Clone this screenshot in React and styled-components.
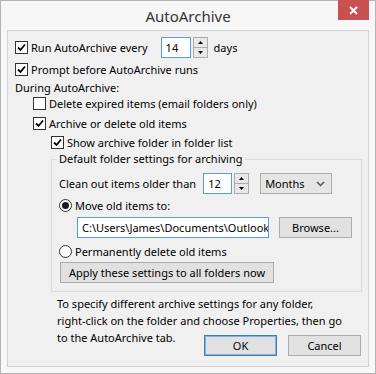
import React from 'react';
import styled, { createGlobalStyle } from 'styled-components';

const Global = createGlobalStyle`
  html, body { margin: 0; padding: 0; background: #ffffff; }
  body { font-family: "Noto Sans", "Open Sans", sans-serif; font-size: 11px; color: #000; }
`;

const Window = styled.div`
  width: 376px;
  height: 374px;
  box-sizing: border-box;
  border: 1px solid #b4b4b4;
  background: #f7f7f7;
  display: flex;
  flex-direction: column;
`;

const TitleBar = styled.div`
  height: 29px;
  display: flex;
  align-items: center;
  justify-content: center;
  position: relative;
  font-size: 15px;
  color: #333;
`;

const CloseButton = styled.div`
  position: absolute;
  top: -1px;
  right: 6px;
  width: 31px;
  height: 20px;
  background: #c75050;
  display: flex;
  align-items: center;
  justify-content: center;
`;

const Client = styled.div`
  margin: 0 6px 6px 6px;
  flex: 1;
  border: 1px solid #d4d4d4;
  background: #f0f0f0;
  padding: 5px 7px 0 7px;
  display: flex;
  flex-direction: column;
`;

const Row = styled.div`
  display: flex;
  align-items: center;
  height: ${p => p.h}px;
  margin-left: ${p => p.indent || 0}px;
  margin-top: ${p => p.mt || 0}px;
  white-space: nowrap;
`;

const Box = styled.span`
  width: 13px;
  height: 13px;
  box-sizing: border-box;
  border: 1px solid #333;
  background: #fff;
  display: inline-flex;
  align-items: center;
  justify-content: center;
  margin-right: 3px;
  flex: none;
`;

const RadioDot = styled.span`
  width: 13px;
  height: 13px;
  box-sizing: border-box;
  border: 1px solid #333;
  border-radius: 50%;
  background: #fff;
  display: inline-flex;
  align-items: center;
  justify-content: center;
  margin-right: 3px;
  flex: none;
  &::after {
    content: '';
    display: ${p => (p.on ? 'block' : 'none')};
    width: 7px;
    height: 7px;
    border-radius: 50%;
    background: #1a1a1a;
  }
`;

const TextBox = styled.div`
  width: ${p => p.w}px;
  height: 21px;
  box-sizing: border-box;
  border: 1px solid #569de5;
  background: #fff;
  display: flex;
  align-items: center;
  padding-left: 4px;
  margin-left: ${p => p.ml || 0}px;
  overflow: hidden;
`;

const Spinner = styled.div`
  display: flex;
  flex-direction: column;
  margin-left: 2px;
  width: 15px;
  height: 21px;
`;

const SpinHalf = styled.div`
  flex: 1;
  box-sizing: border-box;
  border: 1px solid #acacac;
  background: #e8e8e8;
  display: flex;
  align-items: center;
  justify-content: center;
  & + & { border-top: none; }
`;

const Select = styled.div`
  width: 72px;
  height: 21px;
  box-sizing: border-box;
  border: 1px solid #acacac;
  background: #e5e5e5;
  display: flex;
  align-items: center;
  justify-content: space-between;
  padding: 0 6px 0 4px;
  margin-left: 11px;
`;

const Button = styled.div`
  width: ${p => p.w}px;
  height: 21px;
  box-sizing: border-box;
  border: 1px solid ${p => (p.primary ? '#3c7fb1' : '#acacac')};
  background: #e1e1e1;
  display: flex;
  align-items: center;
  justify-content: center;
  margin-left: ${p => p.ml || 0}px;
  ${p => p.primary && 'box-shadow: inset 0 0 0 1px #7eb4ea;'}
`;

const Group = styled.fieldset`
  margin: -1px 0 0 36px;
  width: 311px;
  box-sizing: border-box;
  border: 1px solid #dcdcdc;
  padding: 0 0 8px 7px;
  min-width: 0;
`;

const Legend = styled.legend`
  padding: 0 2px;
  margin-left: -2px;
  line-height: 16px;
`;

const Note = styled.div`
  margin: 3px 0 0 42px;
  line-height: 17px;
`;

const Footer = styled.div`
  display: flex;
  justify-content: flex-end;
  margin-top: -11px;
`;

const Days = styled.span`
  margin-left: 6px;
`;

const Check = () => (
  <svg width="9" height="9" viewBox="0 0 9 9">
    <path d="M1 4.5 L3.5 7 L8 1.5" fill="none" stroke="#000" strokeWidth="1.8" />
  </svg>
);

const Up = () => (
  <svg width="5" height="3" viewBox="0 0 5 3"><path d="M0 3 L2.5 0 L5 3 Z" fill="#000" /></svg>
);
const Down = () => (
  <svg width="5" height="3" viewBox="0 0 5 3"><path d="M0 0 L2.5 3 L5 0 Z" fill="#000" /></svg>
);

const Spin = ({ value, w, ml }) => (
  <>
    <TextBox w={w} ml={ml}>{value}</TextBox>
    <Spinner>
      <SpinHalf><Up /></SpinHalf>
      <SpinHalf><Down /></SpinHalf>
    </Spinner>
  </>
);

const CheckBox = ({ on }) => <Box>{on && <Check />}</Box>;

export default function App() {
  return (
    <>
      <Global />
      <Window>
        <TitleBar>
          AutoArchive
          <CloseButton>
            <svg width="9" height="9" viewBox="0 0 9 9">
              <path d="M1 1 L8 8 M8 1 L1 8" stroke="#fff" strokeWidth="2" />
            </svg>
          </CloseButton>
        </TitleBar>
        <Client>
          <Row h={22}>
            <CheckBox on />Run AutoArchive every
            <Spin value="14" w={30} ml={13} />
            <Days>days</Days>
          </Row>
          <Row h={23}><CheckBox on />Prompt before AutoArchive runs</Row>
          <Row h={12}>During AutoArchive:</Row>
          <Row h={21} indent={18}><CheckBox />Delete expired items (email folders only)</Row>
          <Row h={18} indent={18}><CheckBox on />Archive or delete old items</Row>
          <Row h={20} indent={36}><CheckBox on />Show archive folder in folder list</Row>
          <Group>
            <Legend>Default folder settings for archiving</Legend>
            <Row h={21} mt={6}>
              Clean out items older than
              <Spin value="12" w={29} ml={7} />
              <Select>
                Months
                <svg width="9" height="6" viewBox="0 0 9 6">
                  <path d="M1 1 L4.5 4.5 L8 1" fill="none" stroke="#555" strokeWidth="1.5" />
                </svg>
              </Select>
            </Row>
            <Row h={20} mt={1}><RadioDot on />Move old items to:</Row>
            <Row h={21} mt={2} indent={18}>
              <TextBox w={192}>C:\Users\James\Documents\Outlook</TextBox>
              <Button w={73} ml={10}>Browse...</Button>
            </Row>
            <Row h={20} mt={3}><RadioDot />Permanently delete old items</Row>
            <Row h={21} mt={1}>
              <Button w={214} ml={1}>Apply these settings to all folders now</Button>
            </Row>
          </Group>
          <Note>
            To specify different archive settings for any folder,<br />
            right-click on the folder and choose Properties, then go<br />
            to the AutoArchive tab.
          </Note>
          <Footer>
            <Button w={73} primary>OK</Button>
            <Button w={73} ml={11}>Cancel</Button>
          </Footer>
        </Client>
      </Window>
    </>
  );
}
